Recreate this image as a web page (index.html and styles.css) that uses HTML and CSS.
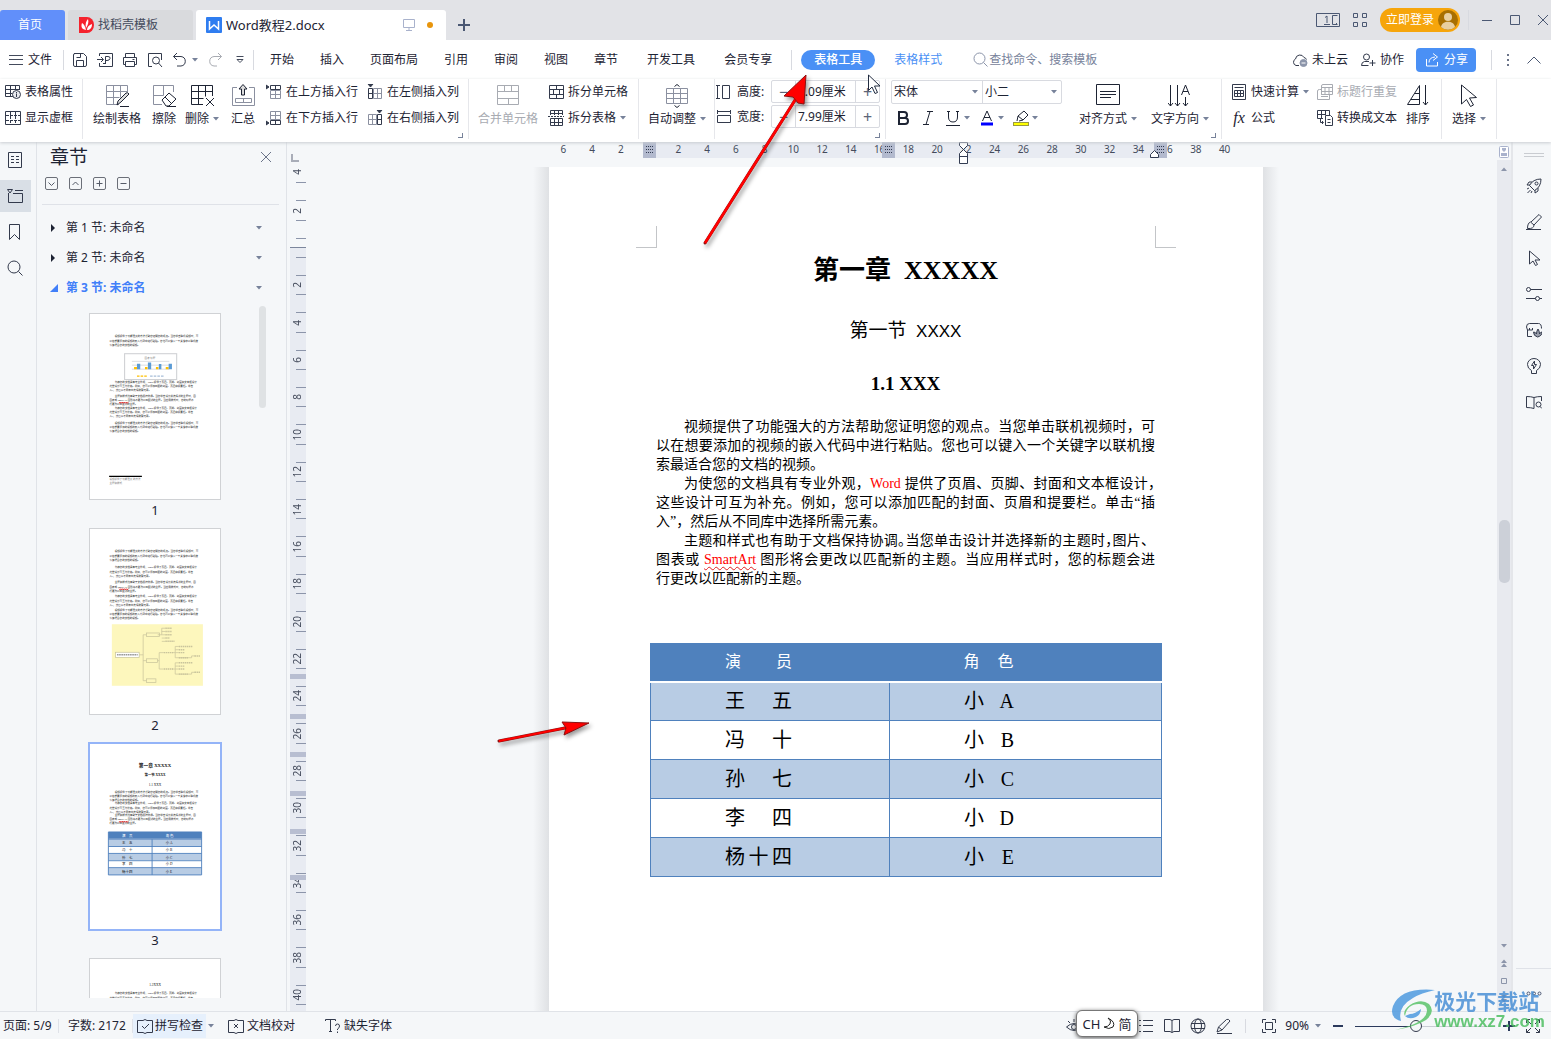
FILE: index.html
```html
<!DOCTYPE html>
<html lang="zh-CN">
<head>
<meta charset="utf-8">
<title>Word教程2.docx</title>
<link rel="stylesheet" href="styles.css">
</head>
<body>
<svg class="defs" aria-hidden="true">
  <symbol id="caret" viewBox="0 0 6 4"><path d="M0 0h6L3 3.500z" fill="#77829a"/></symbol>
</svg>

<header class="titlebar">
  <nav class="tabs">
    <a class="tab tab-home" href="#">首页</a>
    <a class="tab tab-store" href="#"><svg width="15" height="16" viewBox="0 0 15 16"><path d="M0 0h8a7 8 0 0 1 0 16H0z" fill="#f5222d"/><path d="M7 13C2 12 2 9 3 6c2 1 3 3 4 7zM7 11C6 7 7 4 9 2c1 3 0 6-2 9zM8 13c0-3 2-5 5-6 0 4-2 6-5 6z" fill="#fff"/></svg>找稻壳模板</a>
    <a class="tab tab-doc" href="#"><svg width="16" height="16" viewBox="0 0 16 16"><rect width="16" height="16" rx="1" fill="#2f7df0"/><path d="M3.500 4v8L8 8l4.500 4V4" fill="none" stroke="#fff" stroke-width="1.500"/></svg><span class="tab-name">Word教程2.docx</span><svg width="12" height="12" viewBox="0 0 12 12" fill="none" stroke="#a9b2cc"><path d="M.5.5h11v8H.5zM6 8.500v3M3 11.500h6"/></svg><i class="unsaved"></i></a>
    <button class="newtab" aria-label="新建"><svg width="12" height="12" viewBox="0 0 12 12"><path d="M6 0v12M0 6h12" stroke="#4b5873" stroke-width="2"/></svg></button>
  </nav>
  <div class="wincontrols">
    <svg width="24" height="14" viewBox="0 0 24 14" fill="none" stroke="#4b5873"><path d="M.5.5h23v13H.5zM21.500 2.500h-5v9h5M20 10.500h1M8 11.500h6M11 3v7M9 4.500l2-1.500"/></svg>
    <svg width="14" height="14" viewBox="0 0 14 14" fill="none" stroke="#4b5873"><path d="M.5.5h4v4h-4zM9.500.5h4v4h-4zM.5 9.500h4v4h-4zM9.500 9.500h4v4h-4z"/></svg>
    <button class="login">立即登录<svg width="20" height="20" viewBox="0 0 20 20"><circle cx="10" cy="10" r="10" fill="#a86f00"/><circle cx="10" cy="7" r="4" fill="#e8cfa0"/><path d="M3 17c1-7 13-7 14 0a10 10 0 0 1-14 0z" fill="#e8cfa0"/></svg></button>
    <i class="vline"></i>
    <button aria-label="最小化"><svg width="10" height="10" viewBox="0 0 10 10"><path d="M0 5.500h10" stroke="#4b5873"/></svg></button>
    <button aria-label="最大化"><svg width="10" height="10" viewBox="0 0 10 10"><path d="M.5.5h9v9h-9z" fill="none" stroke="#4b5873"/></svg></button>
    <button aria-label="关闭"><svg width="10" height="10" viewBox="0 0 10 10"><path d="M0 0l10 10M10 0L0 10" stroke="#4b5873"/></svg></button>
  </div>
</header>

<div class="menubar">
  <button class="file"><svg width="14" height="12" viewBox="0 0 14 12"><path d="M0 1.500h14M0 5.500h14M0 10.500h14" stroke="#444b5c"/></svg>文件</button>
  <i class="vline"></i>
  <div class="quick">
    <button aria-label="保存"><svg class="ic" viewBox="0 0 16 16"><path d="M2 1.500h9.500l3 3v8.500a1.500 1.500 0 0 1-1.500 1.500H3A1.500 1.500 0 0 1 1.500 13V3A1.500 1.500 0 0 1 3 1.500M4.500 14V8.500h7V14M4.500 5.500h4M8.500 1.500v4"/></svg></button>
    <button aria-label="输出为PDF"><svg class="ic" viewBox="0 0 16 16"><path d="M2.500 4V1.500h13v13h-13V11M0 7.500h6M4 5l2.500 2.500L4 10M8.500 12V4.500h2.500q2.500 0 2 2T10 8.500H8.500M8.500 11.500H6"/></svg></button>
    <button aria-label="打印"><svg class="ic" viewBox="0 0 16 16"><path d="M3.500 5V1.500h9V5M3.500 12.500h-2v-7h13v7h-2M3.500 9.500h9v5h-9zM10.500 7.500h2"/></svg></button>
    <button aria-label="打印预览"><svg class="ic" viewBox="0 0 16 16"><path d="M5 14.500H1.500v-13h13V8"/><circle cx="9" cy="8.500" r="3.500"/><path d="M11.500 11l3.500 4"/></svg></button>
    <button class="drop" aria-label="撤消"><svg class="ic" viewBox="0 0 16 16"><path d="M5 1L1.500 4.500 5 8M1.500 4.500H9a5 4.800 0 0 1 0 9.500H5"/></svg><svg class="caret"><use href="#caret"/></svg></button>
    <button class="dim" aria-label="恢复"><svg class="ic" viewBox="0 0 16 16"><path d="M11 1l3.500 3.500L11 8M14.500 4.500H7A5 4.800 0 0 0 7 14h3"/></svg></button>
    <button class="custom" aria-label="自定义"><svg width="8" height="8" viewBox="0 0 8 8" fill="none" stroke="#444b5c"><path d="M.5.500h7M1 3.500h6L4 6.500z"/></svg></button>
  </div>
  <i class="vline"></i>
  <nav class="menu">
    <a href="#">开始</a><a href="#">插入</a><a href="#">页面布局</a><a href="#">引用</a><a href="#">审阅</a><a href="#">视图</a><a href="#">章节</a><a class="wide" href="#">开发工具</a><a class="wide" href="#">会员专享</a>
  </nav>
  <i class="vline"></i>
  <a class="pill" href="#">表格工具</a>
  <a class="style-tab" href="#">表格样式</a>
  <label class="search"><svg width="15" height="15" viewBox="0 0 15 15" fill="none" stroke="#8c95aa"><circle cx="6.500" cy="6.500" r="5.500"/><path d="M10.500 10.500l4 4"/></svg><input type="text" value="查找命令、搜索模板" aria-label="查找命令"></label>
  <div class="menu-right">
    <button><svg class="ic" viewBox="0 0 16 16"><path d="M7 13.500H4a3.500 3.500 0 0 1-.5-6.500A4.500 4.500 0 0 1 12 5.500q2 .5 2.500 2"/><circle cx="11.500" cy="11" r="3.500" fill="#8c95aa" stroke="#8c95aa"/><path d="M9.500 11h4" stroke="#fff"/></svg>未上云</button>
    <button><svg class="ic" viewBox="0 0 16 16"><circle cx="6.500" cy="5" r="3"/><path d="M9 9.500H4.500Q1.500 10 1.500 13.500h7M12.500 8v6M9.500 11h6"/></svg>协作</button>
    <button class="share"><svg class="ic" viewBox="0 0 16 16"><path d="M2.500 7v7h11v-4M5 10.500q0-5 6-5.500M9 1.500L13.500 5 9 8.500"/></svg>分享</button>
    <i class="vline"></i>
    <button aria-label="更多"><svg width="4" height="14" viewBox="0 0 4 14" fill="#6b7489"><path d="M1 1h2v2H1zM1 6h2v2H1zM1 11h2v2H1z"/></svg></button>
    <button class="fold" aria-label="收起"><svg width="14" height="8" viewBox="0 0 14 8"><path d="M.5 7.500L7 1l6.500 6.500" fill="none" stroke="#4b5873"/></svg></button>
  </div>
</div>

<div class="ribbon">
  <section class="group g-prop">
    <div class="rows">
      <button><svg class="ic" viewBox="0 0 16 16"><path d="M8 12.500H.5v-11h14V6M.5 5.500h14M.5 9.500h7M5.500 1.500v11M10.500 1.500v4"/><circle cx="11.500" cy="10.500" r="4" fill="#e8eaef"/><path d="M11.500 9.500v3.500M11.500 8v1"/></svg>表格属性</button>
      <button><svg class="ic" viewBox="0 0 16 16"><path d="M.5 1.500h15v13H.5z"/><path d="M1 5.500h14M1 10.500h14M5.500 2v12M10.500 2v12" stroke-dasharray="3 1"/></svg>显示虚框</button>
    </div>
  </section>
  <section class="group g-draw">
    <button class="big w56"><svg class="bi" viewBox="0 0 24 24"><path d="M14 20.500H1.500v-19h21V8M1.500 7.500h21M1.500 13.500h13M8.500 1.500v19M15.500 1.500v12" stroke="#8b90a0"/><path d="M12 21l1-4 8-8q2-1 3 1l-8 8-4 3M15 22.500h9" fill="#ddd"/></svg>绘制表格</button>
    <button class="big w38"><svg class="bi" viewBox="0 0 24 24"><path d="M10 20.500H1.500v-19h20V8M1.500 11.500h10M11.500 1.500v10" stroke="#8b90a0"/><path d="M10 16l7-7 7 6-7 7h-3zM13 13l6 6M15 22.500h9" fill="#fff"/></svg>擦除</button>
    <button class="big w38"><svg class="bi" viewBox="0 0 24 24"><path d="M13 20.500H1.500v-19h21V12M1.500 7.500h21M1.500 14.500h12M8.500 1.500v19M15.500 1.500v11M16 14l8 8M24 14l-8 8"/></svg><span>删除<svg class="caret"><use href="#caret"/></svg></span></button>
    <button class="big w42"><svg class="bi" viewBox="0 0 24 24"><path d="M6 3.500H1.500v18h22v-18H18M4.500 14.500h16v4h-16zM12.500 14.500v4" stroke="#8b90a0"/><path d="M10.500 11V5H8l4-4.500L16 5h-2.500v6z" fill="#ddd"/></svg>汇总</button>
    <div class="rows ins-row">
      <button><svg class="ic" viewBox="0 0 16 16"><path d="M4.500 1.500h10v4h-10zM9.500 1.500v4"/><path d="M4.500 6.500h10v8h-10zM4.500 10.500h10M9.500 6.500v8" stroke="#8b90a0"/><path d="M0 1l3 2-3 2z" fill="currentColor"/></svg>在上方插入行</button>
      <button><svg class="ic" viewBox="0 0 16 16"><path d="M4.500 10.500h10v4h-10zM9.500 10.500v4"/><path d="M4.500 1.500h10v8h-10zM4.500 5.500h10M9.500 1.500v8" stroke="#8b90a0"/><path d="M0 11l3 2-3 2z" fill="currentColor"/></svg>在下方插入行</button>
    </div>
    <div class="rows ins-col">
      <button><svg class="ic" viewBox="0 0 16 16"><path d="M1.500 4.500h4v10h-4zM1.500 9.500h4"/><path d="M6.500 4.500h8v10h-8zM10.500 4.500v10M6.500 9.500h8" stroke="#8b90a0"/><path d="M1 0h5L3.500 3z" fill="currentColor"/></svg>在左侧插入列</button>
      <button><svg class="ic" viewBox="0 0 16 16"><path d="M10.500 4.500h4v10h-4zM10.500 9.500h4"/><path d="M1.500 4.500h8v10h-8zM5.500 4.500v10M1.500 9.500h8" stroke="#8b90a0"/><path d="M10 0h5l-2.500 3z" fill="currentColor"/></svg>在右侧插入列</button>
    </div>
    <i class="launcher"></i>
  </section>
  <section class="group g-merge">
    <button class="big w70 dim" disabled><svg class="bi" viewBox="0 0 24 24"><path d="M1.500 1.500h21v19h-21zM1.500 7.500h21v7h-21zM8.500 1.500v6M15.500 1.500v6M12.500 14.500v6"/></svg>合并单元格</button>
    <div class="rows">
      <button><svg class="ic" viewBox="0 0 16 16"><path d="M1.500 1.500h14v13h-14zM1.500 5.500h14v5h-14zM8.500 1.500v4M8.500 10.500v4M5.500 5.500v5M11.500 5.500v5"/></svg>拆分单元格</button>
      <button><svg class="ic" viewBox="0 0 16 16"><path d="M2.500 5V.5h12V5M2.500 3.500h12M6.500.5V5M10.500.5V5M2.500 8.500h12v7h-12zM2.500 12.500h12M6.500 8.500v7M10.500 8.500v7"/><path d="M0 6.500h16" stroke-dasharray="2 1"/></svg>拆分表格<svg class="caret"><use href="#caret"/></svg></button>
    </div>
  </section>
  <section class="group g-fit">
    <button class="big w60"><svg class="bi" viewBox="0 0 24 24"><path d="M1.500 4.500h21v15h-21zM1.500 9.500h21M1.500 14.500h21M8.500 4.500v15M15.500 4.500v15" stroke="#8b90a0"/><path d="M9.500 2.500L12 .5l2.500 2M9.500 21.500l2.500 2 2.500-2"/></svg><span>自动调整<svg class="caret"><use href="#caret"/></svg></span></button>
  </section>
  <section class="group g-size">
    <div class="spin"><svg class="ic" viewBox="0 0 16 16"><path d="M1.500 1.500v13M0 1.500h4M0 14.500h4M6.500 1.500h7v13h-7z"/></svg><label for="h">高度:</label><div class="stepper"><button aria-label="减小高度">−</button><input id="h" type="text" value="1.09厘米"><button aria-label="增大高度">+</button></div></div>
    <div class="spin"><svg class="ic" viewBox="0 0 16 16"><path d="M1.500 2.500h13M1.500 1v4M14.500 1v4M1.500 6.500h13v7h-13z"/></svg><label for="w">宽度:</label><div class="stepper"><button aria-label="减小宽度">−</button><input id="w" type="text" value="7.99厘米"><button aria-label="增大宽度">+</button></div></div>
    <i class="launcher"></i>
  </section>
  <section class="group g-font">
    <div class="fontbox">
      <div class="selects">
        <span class="sel sel-face"><select aria-label="字体"><option>宋体</option></select><svg class="caret"><use href="#caret"/></svg></span>
        <span class="sel sel-size"><select aria-label="字号"><option>小二</option></select><svg class="caret"><use href="#caret"/></svg></span>
      </div>
      <div class="fmt">
        <button aria-label="加粗"><svg class="ic" viewBox="0 0 16 16"><path d="M4 2h5a3 3 0 0 1 0 6H4zM4 8h6a3 3 0 0 1 0 6H4z" stroke-width="2"/></svg></button>
        <button aria-label="倾斜"><svg class="ic" viewBox="0 0 16 16"><path d="M7 1.500h6M3 14.500h6M10 1.500l-4 13"/></svg></button>
        <button class="drop" aria-label="下划线"><svg class="ic" viewBox="0 0 16 16"><path d="M3.500 1v6q0 5 4.500 5t4.500-5V1M1 15.500h14M2 1.500h3M11 1.500h3"/></svg><svg class="caret"><use href="#caret"/></svg></button>
        <button class="drop" aria-label="字体颜色"><svg class="ic" viewBox="0 0 16 16"><path d="M3.500 11L8 1l4.500 10M5 7.500h6"/><path d="M2 14h12" stroke="#00f" stroke-width="3"/></svg><svg class="caret"><use href="#caret"/></svg></button>
        <button class="drop" aria-label="突出显示"><svg class="ic" viewBox="0 0 16 16"><path d="M4 11l1-5 6-5 4 4-5 5-4 1M5 6l5 4"/><rect x=".5" y="12.500" width="15" height="3" fill="#ff0" stroke="#999940"/></svg><svg class="caret"><use href="#caret"/></svg></button>
      </div>
    </div>
    <button class="big w72"><svg class="bi" viewBox="0 0 24 24"><path d="M.5.500h23v20H.5zM4 7.500h16M4 10.500h16M4 13.500h11"/></svg><span>对齐方式<svg class="caret"><use href="#caret"/></svg></span></button>
    <button class="big w72"><svg class="bi" viewBox="0 0 24 24"><path d="M2.500 1v21M0 19l2.500 3L5 19M9.500 1v21M7 19l2.500 3 2.500-3M17.500 13v9M15 19l2.500 3 2.500-3M13.500 11L17.500 1l4 10M15 7.500h5"/></svg><span>文字方向<svg class="caret"><use href="#caret"/></svg></span></button>
    <i class="launcher"></i>
  </section>
  <section class="group g-data">
    <div class="rows calc">
      <button><svg class="ic" viewBox="0 0 16 16"><path d="M1.500.5h13v15h-13zM3.500 3.500h9M3.500 6.500h9v6h-9zM3.500 9.500h9M6.500 6.500v6M9.500 6.500v6"/></svg>快速计算<svg class="caret"><use href="#caret"/></svg></button>
      <button><i class="fx">fx</i>公式</button>
    </div>
    <div class="rows">
      <button class="dim" disabled><svg class="ic" viewBox="0 0 16 16"><path d="M4.500 10.500V2q0-1.500 1.500-1.500h9.500v10zM4.500 3.500h11M8 3.500v7M12 3.500v7M4.500 7.500h11M.5 15.500V7q0-1.500 2-1.500h2v5h8v5zM4 12.500h7"/></svg>标题行重复</button>
      <button><svg class="ic" viewBox="0 0 16 16"><path d="M6 8.500H.5V.5h12V5M.5 4.500h8M4.500.5v8M8.500.5V5M3.500 9v3.500H6M5 11l1.500 1.500L5 14M8.500 5.500h5l2 2v8h-7zM10.500 9.500h3M10.500 12.500h3"/></svg>转换成文本</button>
    </div>
    <button class="big w42"><svg class="bi" viewBox="0 0 24 24"><path d="M1.500 20.500h12V1.500zM5 15.500h8.500M9 9.500h4.500M19.500 1v20M17 18l2.500 3L22 18"/></svg>排序</button>
  </section>
  <section class="group g-select">
    <button class="big w54"><svg class="bi" viewBox="0 0 24 24"><path d="M4.500 1v19l5-4.500 4 7 3-1.500-4-7 7-.5z"/></svg><span>选择<svg class="caret"><use href="#caret"/></svg></span></button>
  </section>
</div>

<main class="work">
  <nav class="rail-left">
    <button aria-label="目录"><svg class="ic" viewBox="0 0 16 16"><path d="M1.500.5h13v15h-13zM4 4.500h3M9 4.500h3M4 7.500h3M9 7.500h3M4 10.500h3M9 10.500h3"/></svg></button>
    <button class="on" aria-label="章节"><svg class="ic" viewBox="0 0 16 16"><path d="M1.500 5v9.500h14v-9H6M.5 1.500h5L3 5zM8 2.500h8"/></svg></button>
    <button aria-label="书签"><svg class="ic" viewBox="0 0 16 16"><path d="M2.500.5h10v15l-5-5-5 5z"/></svg></button>
    <button aria-label="查找"><svg class="ic" viewBox="0 0 16 16"><circle cx="7" cy="7" r="6"/><path d="M11.500 11.500l4 4"/></svg></button>
  </nav>

  <aside class="panel">
    <div class="panel-head"><h2>章节</h2><button aria-label="关闭窗格"><svg width="10" height="10" viewBox="0 0 10 10"><path d="M0 0l10 10M10 0L0 10" stroke="#6b7489"/></svg></button></div>
    <div class="panel-tools">
      <button aria-label="展开"><svg width="13" height="13" viewBox="0 0 13 13"><path d="M3.500 5.500l3 3 3-3"/></svg></button>
      <button aria-label="折叠"><svg width="13" height="13" viewBox="0 0 13 13"><path d="M3.500 8l3-3 3 3"/></svg></button>
      <button aria-label="新增"><svg width="13" height="13" viewBox="0 0 13 13"><path d="M3.500 6.500h6M6.500 3.500v6"/></svg></button>
      <button aria-label="删除"><svg width="13" height="13" viewBox="0 0 13 13"><path d="M3.500 6.500h6"/></svg></button>
    </div>
    <ul class="tree">
      <li><svg width="6" height="8" viewBox="0 0 6 8"><path d="M1 0l4 4-4 4z" fill="#1d2333"/></svg><span>第 1 节: 未命名</span><svg class="caret"><use href="#caret"/></svg></li>
      <li><svg width="6" height="8" viewBox="0 0 6 8"><path d="M1 0l4 4-4 4z" fill="#1d2333"/></svg><span>第 2 节: 未命名</span><svg class="caret"><use href="#caret"/></svg></li>
      <li class="open"><svg width="8" height="8" viewBox="0 0 8 8"><path d="M8 0v8H0z" fill="#417ff9"/></svg><span>第 3 节: 未命名</span><svg class="caret"><use href="#caret"/></svg></li>
    </ul>
    <div class="thumbs">
      <figure>
        <svg class="thumb" viewBox="0 0 714 1010">
          <g transform="translate(0 112)"><g id="para1">
            <text x="136" y="14">视频提供了功能强大的方法帮助您证明您的观点。当您单击联机视频时，可</text>
            <text x="107" y="38">以在想要添加的视频的嵌入代码中进行粘贴。您也可以键入一个关键字以联机搜</text>
            <text x="107" y="60">索最适合您的文档的视频。</text>
          </g></g>
          <rect x="190" y="215" width="286" height="142" fill="#fff" stroke="#d0d2d5" stroke-width="6"/>
          <text x="300" y="243" class="t-mute">图表 标题</text>
          <path d="M230 257h206M230 278h206M230 300h206" stroke="#d0d2d5" stroke-width="4"/>
          <path d="M242 300v-12h16v12zM302 300v-12h14v12zM362 300v-12h14v12zM416 300v-12h16v12z" fill="#ffc000"/>
          <path d="M258 300v-30h18v30zM318 300v-36h18v36zM378 300v-28h14v28zM432 300v-30h18v30z" fill="#5b9bd5"/>
          <path d="M258 338h60" stroke="#ffc000" stroke-width="6" stroke-dasharray="14 6"/><path d="M330 338h80" stroke="#a6bdd8" stroke-width="6" stroke-dasharray="14 6"/>
          <g transform="translate(0 362)"><g id="para2">
            <text x="136" y="14">为使您的文档具有专业外观，Word 提供了页眉、页脚、封面和文本框设计</text>
            <text x="107" y="38">这些设计可互为补充。例如，您可以添加匹配的封面、页眉和提要栏。单击</text>
            <text x="107" y="60">入”，然后从不同库中选择所需元素。</text>
          </g></g>
          <g transform="translate(0 438)"><g id="para3">
            <text x="136" y="14">主题和样式也有助于文档保持协调。当您单击设计并选择新的主题时，图</text>
            <text x="107" y="38">图表或 SmartArt 图形将会更改以匹配新的主题。当应用样式时，您的标题会</text>
            <text x="107" y="60">行更改以匹配新的主题。</text>
            <path d="M160 43l5 6 5-6 5 6 5-6 5 6 5-6 5 6 5-6 5 6 5-6" stroke="#e02020" stroke-width="5" fill="none"/>
          </g></g>
          <use href="#para2" y="504"/>
          <use href="#para1" y="586"/>
          <path d="M105 889h180" stroke="#000" stroke-width="6"/>
          <text x="107" y="908" class="t-mute">视频提供了功能强大 的方法</text><text x="107" y="928" class="t-mute">主题和样式</text>
        </svg><figcaption>1</figcaption>
      </figure>
      <figure>
        <svg class="thumb" viewBox="0 0 714 1010">
          <use href="#para1" y="112"/>
          <use href="#para2" y="198"/>
          <use href="#para3" y="282"/>
          <use href="#para2" y="358"/>
          <use href="#para1" y="434"/>
          <rect x="120" y="520" width="500" height="338" fill="#fdf7bd"/>
          <g fill="none" stroke="#c9c49c" stroke-width="4"><rect x="140" y="674" width="130" height="28" fill="#fff"/><path d="M270 688h22M310 578h-18v252h18M292 720h18M372 578h22v-36h20M394 560h20M394 578h20M394 596h20M394 614h20M372 720h8v-44h26M380 720v46h26M450 676h18v-34h20M468 660h20M468 676h20M468 704h90v-10h20M468 676v28M450 766h18v-34h20M468 750h20M468 766h20M468 794h90v-10h20M468 766v28"/><rect x="310" y="568" width="72" height="20"/><rect x="310" y="710" width="60" height="20"/><rect x="310" y="820" width="52" height="20"/><path d="M414 542h36M414 560h36M414 578h36M414 596h24M414 614h50M406 676h50M406 766h50M488 642h76M488 660h30M488 676h30M488 704h50M488 732h76M488 750h30M488 766h30M488 794h50M574 694h30M574 784h30" stroke-width="8" stroke-dasharray="8 3"/></g>
          <path d="M148 688h114" stroke="#999" stroke-width="8" stroke-dasharray="9 3"/>
        </svg><figcaption>2</figcaption>
      </figure>
      <figure class="current">
        <svg class="thumb" viewBox="0 0 714 1010">
          <text x="357" y="122" class="t-h1">第一章 XXXXX</text>
          <text x="357" y="175" class="t-h2">第一节 XXXX</text>
          <text x="357" y="228" class="t-h3">1.1 XXX</text>
          <use href="#para1" y="250"/>
          <use href="#para2" y="314"/>
          <use href="#para3" y="378"/>
          <path d="M101 480h512v236H101z" fill="#fff"/>
          <path d="M101 480h512v38H101z" fill="#4f81bd"/>
          <path d="M101 522h512v36H101zM101 600h512v36H101zM101 678h512v38H101z" fill="#b8cce4"/>
          <path d="M101 480h512v236H101zM101 520h512M101 560h512M101 598h512M101 638h512M101 676h512M341 520v196" fill="none" stroke="#4f81bd" stroke-width="5"/>
          <g class="t-cell"><text x="176" y="508" fill="#fff">演　员</text><text x="416" y="508" fill="#fff">角 色</text><text x="176" y="548">王　五</text><text x="416" y="548">小 A</text><text x="176" y="586">冯　十</text><text x="416" y="586">小 B</text><text x="176" y="626">孙　七</text><text x="416" y="626">小 C</text><text x="176" y="664">李　四</text><text x="416" y="664">小 D</text><text x="176" y="704">杨十四</text><text x="416" y="704">小 E</text></g>
        </svg><figcaption>3</figcaption>
      </figure>
      <figure>
        <svg class="thumb" viewBox="0 0 714 1010">
          <text x="357" y="146" class="t-h3">1.2XXX</text>
          <use href="#para2" y="176"/>
        </svg>
      </figure>
      <i class="thumb-scroll"></i>
    </div>
  </aside>

  <div class="vruler">
    <ol>
      <li><b>4</b></li><li><b>2</b></li><li></li><li><b>2</b></li><li><b>4</b></li><li><b>6</b></li><li><b>8</b></li><li><b>10</b></li><li><b>12</b></li><li><b>14</b></li><li><b>16</b></li><li><b>18</b></li><li><b>20</b></li><li><b>22</b></li><li><b>24</b></li><li><b>26</b></li><li><b>28</b></li><li><b>30</b></li><li><b>32</b></li><li><b>34</b></li><li><b>36</b></li><li><b>38</b></li><li><b>40</b></li>
    </ol>
    <svg class="row-marks" width="16" height="206" viewBox="0 0 16 206"><path d="M0 0h16v5H0zM0 40h16v5H0zM0 78h16v5H0zM0 117h16v5H0zM0 155h16v5H0zM0 201h16v5H0z" fill="#b8bed1"/></svg>
  </div>

  <div class="canvas">
    <div class="hruler">
      <ol>
        <li>6</li><li>4</li><li>2</li><li></li><li>2</li><li>4</li><li>6</li><li>8</li><li>10</li><li>12</li><li>14</li><li>16</li><li>18</li><li>20</li><li>22</li><li>24</li><li>26</li><li>28</li><li>30</li><li>32</li><li>34</li><li>36</li><li>38</li><li>40</li>
      </ol>
      <svg class="col-marks" width="714" height="24" viewBox="0 0 714 24"><path d="M94 0h13v16H94zM333 0h13v16h-13zM605 0h13v16h-13z" fill="#b3bace"/><path d="M97 4.500h8M97 7.500h8M97 10.500h8M336 4.500h8M336 7.500h8M336 10.500h8M608 4.500h8M608 7.500h8M608 10.500h8" stroke="#333c52" stroke-dasharray="1 1"/><path d="M410.500.5h8v3l-4 4 4 4v10h-8v-10l4-4-4-4zM410.500 14.500h8M601.500 15.500v-3l4-4 4 4v3z" fill="#fff" stroke="#333c52"/></svg>
    </div>
    <div class="sheet-wrap">
      <article class="sheet">
        <i class="crop crop-l"></i><i class="crop crop-r"></i>
        <h1>第一章&nbsp; XXXXX</h1>
        <h2>第一节&nbsp; <span>XXXX</span></h2>
        <h3>1.1 XXX</h3>
        <p><span class="ln in">视频提供了功能强大的方法帮助您证明您的观点。当您单击联机视频时，可</span><span class="ln">以在想要添加的视频的嵌入代码中进行粘贴。您也可以键入一个关键字以联机搜</span><span class="ln end">索最适合您的文档的视频。</span></p>
        <p><span class="ln in">为使您的文档具有专业外观，<span class="red">Word</span> 提供了页眉、页脚、封面和文本框设计<b class="half">，</b></span><span class="ln">这些设计可互为补充。例如，您可以添加匹配的封面、页眉和提要栏。单击“插</span><span class="ln end">入”，然后从不同库中选择所需元素。</span></p>
        <p><span class="ln in">主题和样式也有助于文档保持协调<b class="half">。</b>当您单击设计并选择新的主题时<b class="half">，</b>图片、</span><span class="ln">图表或 <span class="red typo">SmartArt</span> 图形将会更改以匹配新的主题。当应用样式时，您的标题会进</span><span class="ln end">行更改以匹配新的主题。</span></p>
        <table>
          <thead><tr><th><span class="w3">演 员</span></th><th><span class="w2">角 色</span></th></tr></thead>
          <tbody>
            <tr><td><span class="w3">王 五</span></td><td><span class="w2">小 A</span></td></tr>
            <tr><td><span class="w3">冯 十</span></td><td><span class="w2">小 B</span></td></tr>
            <tr><td><span class="w3">孙 七</span></td><td><span class="w2">小 C</span></td></tr>
            <tr><td><span class="w3">李 四</span></td><td><span class="w2">小 D</span></td></tr>
            <tr><td><span class="w3">杨十四</span></td><td><span class="w2">小 E</span></td></tr>
          </tbody>
        </table>
      </article>
    </div>
  </div>

  <div class="vscroll">
    <svg width="10" height="12" viewBox="0 0 10 12"><rect x=".5" y=".5" width="9" height="11" rx="1" fill="#fff" stroke="#a9b2cc"/><path d="M3 2h4v2L5 6 3 4zM2 7h6v3H2z" fill="#a9b2cc"/></svg>
    <div class="track">
      <svg width="6" height="4" viewBox="0 0 6 4"><path d="M0 4l3-3.500L6 4z" fill="#8c95aa"/></svg>
      <i class="knob"></i>
      <div class="track-end">
        <svg width="6" height="4" viewBox="0 0 6 4"><path d="M0 0h6L3 3.500z" fill="#8c95aa"/></svg>
        <svg width="6" height="8" viewBox="0 0 6 8"><path d="M0 4l3-3.500L6 4zM0 8l3-3.500L6 8z" fill="#8c95aa"/></svg>
        <svg width="6" height="6" viewBox="0 0 6 6"><path d="M.5.500h5v5h-5z" fill="none" stroke="#8c95aa"/></svg>
        <svg width="6" height="8" viewBox="0 0 6 8"><path d="M0 0h6L3 3.500zM0 4h6L3 7.500z" fill="#8c95aa"/></svg>
      </div>
    </div>
  </div>

  <nav class="rail-right">
    <i class="grip"></i>
    <button aria-label="快捷"><svg class="ic" viewBox="0 0 16 16"><path d="M6 10L3.500 7.500Q7 1 15 1q0 8-6.500 11.500L6 10M4 7H1l2-3h3M9 12v3l3-2v-3M1 11l2-1M1.500 15l3-3M5 15l1-2"/><circle cx="10.500" cy="5.500" r="1.500"/></svg></button>
    <button aria-label="样式"><svg class="ic" viewBox="0 0 16 16"><path d="M5 8l8-7.500L15.500 3 8 11M4.500 8q-3 1-3 6.500Q8 15 8 11zM0 15.500h15"/></svg></button>
    <button aria-label="选择"><svg class="ic" viewBox="0 0 16 16"><path d="M3.500 1v13l3.500-3 2.500 4.500 2-1L9 10h5z"/></svg></button>
    <button aria-label="设置"><svg class="ic" viewBox="0 0 16 16"><circle cx="2.500" cy="3.500" r="2"/><path d="M4.500 3.500H16M0 12.500h9.500M13.500 12.500H16"/><circle cx="11.500" cy="12.500" r="2"/></svg></button>
    <button aria-label="资源"><svg class="ic" viewBox="0 0 16 16"><path d="M6 14.500H1.500V8L.5 5q0-3.500 3-3.500h9q3 0 3 5M1.500 8h2V6M3.500 8h3V6"/><path d="M11.500 15q-4-1-4-5 2 0 3 2 0-3 1.500-5 1.500 2 1.500 5 1-2 2.500-2 0 4-4.500 5z" fill="#9a9fac"/></svg></button>
    <button aria-label="灵感"><svg class="ic" viewBox="0 0 16 16"><path d="M5.500 12.500q-4-2-4-6a6.500 6 0 0 1 13 0q0 4-4 6v3h-5zM8.500 3L5.500 7.500h2V11l3-4.500h-2z"/></svg></button>
    <button aria-label="阅读"><svg class="ic" viewBox="0 0 16 16"><path d="M8 14.500q-3-1-7.500-1v-11q4.500 0 7.500 1 3-1 7.500-1V7M8 3.500v11"/><circle cx="12.500" cy="10.500" r="2.500"/><path d="M14 12.500l2 2"/></svg></button>
    <div class="rail-more"><svg width="16" height="5" viewBox="0 0 16 5" fill="none" stroke="#4b5873"><circle cx="2.500" cy="2.500" r="1.500"/><circle cx="8" cy="2.500" r="1.500"/><circle cx="13.500" cy="2.500" r="1.500"/></svg></div>
  </nav>
</main>

<footer class="status">
  <span class="st-page">页面: 5/9</span><span class="st-words">字数: 2172</span>
  <button class="st-spell"><svg class="ic" viewBox="0 0 16 16"><path d="M6 14.500H.5v-12H6l2-1 2 1h5.500v12H10l-2 1zM5 8l2.500 2.500L12 6"/></svg>拼写检查</button><svg class="caret"><use href="#caret"/></svg>
  <button class="st-proof"><svg class="ic" viewBox="0 0 16 16"><path d="M6 14.500H.5v-12H6l2-1 2 1h5.500v12H10l-2 1zM6 6l4 4M10 6l-4 4"/></svg>文档校对</button>
  <button class="st-miss"><svg class="ic" viewBox="0 0 16 16"><path d="M.5 3V1.500h10V3M5.500 1.500v12M4 13.500h3M10.500 8q0-2 2-2t2 2-2 3v1M12.500 13.500v1.500"/></svg>缺失字体</button>
  <div class="st-right">
    <button aria-label="护眼"><svg class="ic" viewBox="0 0 16 16"><path d="M.5 9Q8 2 15.500 9 8 16 .5 9M2 3l2 2M8 1v3"/><circle cx="8" cy="9" r="2.500"/></svg></button>
    <button class="st-list" aria-label="大纲"><svg class="ic" viewBox="0 0 16 16"><path d="M1 2.500h2M1 7.500h2M1 13.500h2M5 2.500h10M5 7.500h10M5 13.500h10"/></svg></button>
    <button aria-label="阅读版式"><svg class="ic" viewBox="0 0 16 16"><path d="M8 14.500l-2-1H.5v-12H6l2 1 2-1h5.500v12H10zM8 2.500v12"/></svg></button>
    <button aria-label="Web版式"><svg class="ic" viewBox="0 0 16 16"><circle cx="8" cy="8" r="7"/><ellipse cx="8" cy="8" rx="3.500" ry="7"/><path d="M1 5.500h14M1 10.500h14"/></svg></button>
    <button aria-label="写作"><svg class="ic" viewBox="0 0 16 16"><path d="M1 14l1.500-5 8-7.500q2-1 3.500 1.500L6 12l-5 2M2.500 9L6 12M1 15.500h15"/></svg></button>
    <i class="vline"></i>
    <button aria-label="适应"><svg class="ic" viewBox="0 0 16 16"><path d="M1.500 5V1.500H5M11 1.500h3.500V5M14.500 11v3.500H11M5 14.500H1.500V11M4.500 4.500h7v7h-7z"/></svg></button>
    <button class="zoomval">90%<svg class="caret"><use href="#caret"/></svg></button>
    <button class="zoom-btn" aria-label="缩小"><svg width="10" height="12" viewBox="0 0 10 12"><path d="M0 6h10" stroke="#2b3a5c" stroke-width="2"/></svg></button>
    <input class="zoom" type="range" min="0" max="100" value="44" aria-label="缩放">
    <button class="zoom-btn" aria-label="放大"><svg width="12" height="12" viewBox="0 0 12 12"><path d="M0 6h12M6 1v10" stroke="#2b3a5c" stroke-width="2"/></svg></button>
    <button aria-label="全屏"><svg class="ic" viewBox="0 0 16 16"><path d="M1.500 5V1.500H5M11 1.500h3.500V5M14.500 11v3.500H11M5 14.500H1.500V11M1.500 1.500L6 6M14.500 1.500L10 6M14.500 14.500L10 10M1.500 14.500L6 10"/></svg></button>
  </div>
</footer>

<div class="ime">CH <svg width="12" height="13" viewBox="0 0 12 13"><path d="M5 1q4 3 2 6-2 3-6 3 5 3 9 0 3-5-5-9z" fill="none" stroke="#222"/></svg> 简</div>

<div class="watermark">
  <svg width="46" height="42" viewBox="0 0 46 42"><path d="M44 1Q10-2 2 17q-4 12 8 15Q6 18 22 9q8-5 22-8z" fill="#4f9be0"/><path d="M14 27q2-12 14-12 8 0 8 7-1 12-32 19 20-3 31-10 10-8 3-16-8-6-19 1-8 6-5 11z" fill="#5cc46b"/><path d="M14 27q4 4 11 1 5-3 5-8-6 5-11 5z" fill="#4f9be0"/></svg>
  <div><strong>极光下载站</strong><em>www.xz7.com</em></div>
</div>

<svg class="callout callout-tool" width="116" height="182" viewBox="0 0 116 182"><path d="M5 173L97 27" stroke="#8a1010" stroke-width="3" stroke-linecap="round"/><path d="M5 173L97 27" stroke="#f00" stroke-width="2.500"/><path d="M106 5L84 26l9 1 5 6 6 1z" fill="#f00" stroke="#8a1010"/></svg>
<svg class="callout callout-table" width="100" height="34" viewBox="0 0 100 34"><path d="M4 26L70 13" stroke="#8a1010" stroke-width="3" stroke-linecap="round"/><path d="M4 26L70 13" stroke="#f00" stroke-width="2"/><path d="M94 8L67 7l4 6-2 7z" fill="#f00" stroke="#8a1010"/></svg>
<svg class="pointer" width="13" height="21" viewBox="0 0 13 21"><path d="M.5 1v15.500l3.500-3.500 3 6.500 2.500-1-3-6.500h5.500z" fill="#fff" stroke="#222c40"/></svg>
</body>
</html>
```
FILE: styles.css
```css
* { box-sizing: border-box; }
html, body { height: 100%; margin: 0; }
body {
  position: relative;
  display: flex;
  flex-direction: column;
  overflow: hidden;
  background: #f5f7f9;
  color: #1d2333;
  font: 12px/16px "Noto Sans", "Noto Sans CJK SC", sans-serif;
}
button, input, select { font: inherit; color: inherit; }
button { border: 0; padding: 0; background: none; display: flex; align-items: center; white-space: nowrap; }
a { color: inherit; text-decoration: none; white-space: nowrap; }
ol, ul { list-style: none; margin: 0; padding: 0; }
svg { flex: none; display: block; }
.defs { position: absolute; width: 0; height: 0; }
.ic { width: 16px; height: 16px; fill: none; stroke: currentColor; color: #333a4c; }
.bi { width: 24px; height: 24px; fill: none; stroke: currentColor; }
.caret { width: 6px; height: 4px; }
.vline { width: 1px; height: 20px; background: #d8dae0; flex: none; }
.dim, .dim .ic { color: #a8abb2; }

/* title bar */
.titlebar { height: 40px; flex: none; display: flex; justify-content: space-between; background: #e2e3e7; }
.tabs { display: flex; align-items: flex-end; gap: 3px; }
.tab { height: 30px; display: flex; align-items: center; border-radius: 3px 3px 0 0; }
.tab-home { width: 65px; padding-left: 18px; background: #618ffa; color: #fff; }
.tab-store { width: 125px; padding-left: 11px; gap: 4px; background: #d9dadd; color: #444b5c; }
.tab-doc { width: 250px; padding: 0 13px 0 10px; gap: 4px; background: #fff; }
.tab-name { flex: 1; font-size: 13px; }
.tab-doc > svg:nth-of-type(2) { margin-right: 0; }
.unsaved { width: 6px; height: 6px; margin-left: 8px; border-radius: 50%; background: #e8950c; }
.newtab { height: 30px; padding: 0 9px; }
.wincontrols { display: flex; align-items: center; gap: 13px; height: 40px; padding-right: 3px; }
.wincontrols button + button { margin-left: 5px; }
.login { height: 24px; padding: 0 2px 0 6px; gap: 4px; border-radius: 12px; background: #f6a50b; color: #fff; }
.wincontrols .vline { margin-left: -5px; }

/* menu bar */
.menubar { height: 39px; flex: none; display: flex; align-items: center; background: #fff; }
.file { width: 63px; padding-left: 9px; gap: 5px; }
.quick { display: flex; align-items: center; width: 189px; padding-left: 8px; gap: 9px; }
.drop { gap: 4px; }
.custom { margin-left: 4px; }
.menu { display: flex; gap: 26px; padding: 0 19px 0 16px; }
.menu .wide { margin-left: 3px; }
.pill { margin-left: 9px; padding: 2px 13px; border-radius: 10px; background: #4a90f5; color: #fff; font-weight: 500; }
.style-tab { margin-left: 19px; color: #4a90f5; }
.search { display: flex; align-items: center; margin-left: 31px; color: #77829a; }
.search input { width: 130px; border: 0; padding: 0 1px; background: none; }
.menu-right { margin-left: auto; display: flex; align-items: center; gap: 12px; padding-right: 10px; }
.menu-right button { gap: 4px; }
.menu-right .share { height: 24px; padding: 0 8px; gap: 4px; border-radius: 4px; background: #4a90f5; color: #fff; }
.share .ic { color: #fff; }
.menu-right .vline { margin: 0 2px 0 3px; }
.menu-right .fold { margin-left: 5px; }

/* ribbon */
.ribbon { height: 63px; flex: none; display: flex; background: #fff; box-shadow: 0 1px 3px #c9ccd1; z-index: 1; }
.group { position: relative; display: flex; align-items: flex-start; flex: none; border-right: 1px solid #e6e7eb; height: 60px; }
.rows { display: flex; flex-direction: column; }
.rows button { height: 26px; gap: 4px; }
.big { flex-direction: column; align-items: center; height: 52px; padding-top: 5px; gap: 3px; }
.big span { display: flex; align-items: center; gap: 4px; }
.w38 { width: 38px; } .w42 { width: 42px; } .w54 { width: 54px; } .w56 { width: 56px; } .w60 { width: 62px; } .w70 { width: 70px; } .w72 { width: 72px; }
.launcher { position: absolute; right: 5px; bottom: 1px; width: 5px; height: 5px; border: solid #77829a; border-width: 0 1px 1px 0; }
.g-prop { width: 83px; padding-left: 5px; }
.g-draw { width: 386px; padding-left: 6px; }
.ins-row { width: 101px; margin-left: 2px; }
.g-draw .w42 { margin-left: 1px; }
.g-merge { width: 170px; padding-left: 4px; }
.g-merge .rows { margin-left: 5px; }
.g-fit { width: 76px; padding-left: 7px; }
.g-size { width: 171px; padding: 1px 0 0 1px; flex-direction: column; gap: 2px; }
.spin { display: flex; align-items: center; gap: 5px; }
.spin label { width: 29px; }
.stepper { display: flex; width: 109px; height: 23px; border: 1px solid #d8dae0; border-radius: 2px; }
.stepper button { width: 23px; justify-content: center; font-size: 16px; color: #5d6578; }
.stepper input { flex: 1; min-width: 0; border: solid #d8dae0; border-width: 0 1px; padding: 0 2px; background: none; }
.g-font { width: 336px; padding-left: 5px; }
.fontbox { width: 181px; padding-top: 1px; }
.selects { display: flex; width: 171px; height: 24px; border: 1px solid #d8dae0; border-radius: 2px; }
.sel { display: flex; align-items: center; padding-right: 4px; }
.sel select { flex: 1; appearance: none; border: 0; background: none; padding: 0 2px; }
.sel-face { width: 91px; border-right: 1px solid #d8dae0; }
.sel-size { flex: 1; }
.fmt { display: flex; align-items: center; gap: 9px; height: 28px; padding-left: 4px; }
.fmt .drop { gap: 3px; }
.fmt .ic { color: #1d2333; }
.g-data { width: 220px; padding-left: 9px; }
.calc { width: 86px; }
.fx { width: 16px; font: italic 16px/16px "Liberation Serif", serif; }
.g-select { width: 55px; }

/* work area */
.work { flex: 1; min-height: 0; display: flex; overflow: hidden; }
.rail-left { width: 37px; flex: none; border-right: 1px solid #e0e3e8; padding-top: 2px; display: flex; flex-direction: column; gap: 4px; }
.rail-left button { width: 31px; height: 32px; padding-left: 7px; }
.rail-left .on { background: #d9dfe6; }
.panel { width: 250px; flex: none; border-right: 1px solid #e0e3e8; padding: 0 7px 13px 5px; display: flex; flex-direction: column; }
.panel-head { display: flex; align-items: center; justify-content: space-between; height: 30px; padding: 0 8px; }
.panel-head h2 { margin: 0; font-size: 19px; line-height: 30px; font-weight: 400; }
.panel-tools { display: flex; gap: 11px; height: 33px; padding: 5px 3px 0; border-bottom: 1px solid #dfe2e8; }
.panel-tools button { height: 13px; border: 1px solid #6b6f78; border-radius: 2px; width: 13px; justify-content: center; }
.panel-tools svg { fill: none; stroke: #555b68; }
.tree { padding-top: 8px; }
.tree li { display: flex; align-items: center; height: 30px; padding: 0 17px 0 8px; }
.tree li span { flex: 1; padding-left: 10px; }
.tree .open { color: #417ff9; font-weight: 700; }
.tree .open span { padding-left: 8px; }
.thumbs { position: relative; flex: 1; min-height: 0; overflow: hidden; padding: 10px 11px 0 0; display: flex; flex-direction: column; align-items: center; }
.thumbs figure { margin: 0; flex: none; height: 215px; }
.thumb { width: 132px; height: 187px; border: 1px solid #d0d2d5; background: #fff; font: 14px "Liberation Serif", "Noto Sans CJK SC", serif; fill: #111; }
.current .thumb { outline: 2px solid #94b4f8; outline-offset: -1px; }
.thumbs figcaption { text-align: center; line-height: 20px; font-size: 13px; }
.t-mute { fill: #777; }
.t-h1 { font-size: 26px; font-weight: 700; text-anchor: middle; }
.t-h2 { font-size: 19px; font-weight: 700; text-anchor: middle; }
.t-h3 { font-size: 19px; text-anchor: middle; }
.t-cell { font-size: 19px; }
.thumb-scroll { position: absolute; right: 13px; top: 3px; width: 7px; height: 102px; border-radius: 4px; background: #dfe2e4; }

.vruler { position: relative; width: 19px; flex: none; padding: 13px 0 0 3px; overflow: hidden; font: 10px/12px "Noto Sans", sans-serif; color: #444b5c; }
.vruler ol { display: grid; grid-auto-rows: 1fr; height: 859px; background: linear-gradient(transparent 92px, #7c869c 92px, #7c869c 93px, #e8ebf2 93px); }
.vruler li { display: flex; flex-direction: column; justify-content: space-between; padding: 8px 0 9px; min-height: 0; }
.vruler b { writing-mode: vertical-rl; transform: rotate(180deg); font-weight: 400; align-self: flex-start; margin: -4px 0 -4px 1px; }
.vruler li::before, .vruler li::after { content: ""; flex: none; align-self: flex-end; height: 1px; width: 10px; background: #8c95aa; }
.vruler li:first-child::before { width: 6px; height: 6px; margin: -9px 7px 0 0; background: none; border: solid #a9adb8; border-width: 0 0 2px 2px; }
.row-marks { position: absolute; left: 3px; top: 532px; }

.canvas { flex: 1; min-width: 0; display: flex; flex-direction: column; align-items: center; padding-left: 9px; }
.hruler { position: relative; width: 714px; height: 25px; flex: none; font: 10px/15px "Noto Sans", sans-serif; color: #444b5c; }
.hruler ol { display: grid; grid-auto-flow: column; grid-auto-columns: 1fr; width: 714px; padding-right: 24px; text-align: center; background: linear-gradient(to right, transparent 100px, #e8ebf2 100px, #e8ebf2 612px, transparent 612px); min-height: 16px; }
.col-marks { position: absolute; left: 0; top: 0; }
.sheet-wrap { flex: 1; padding: 0 16px; background: linear-gradient(to right, #f5f7f9, #dfe1e4 16px, #dfe1e4 730px, #f5f7f9 746px); }
.sheet { position: relative; width: 714px; height: 100%; padding: 81px 108px 0 107px; background: #fff; color: #000; font: 14px/19px "Liberation Serif", "Noto Sans CJK SC", serif; }
.crop { position: absolute; top: 59px; width: 21px; height: 22px; border: solid #c3c5c8; border-width: 0 0 1px 0; }
.crop-l { left: 87px; border-right-width: 1px; }
.crop-r { right: 87px; border-left-width: 1px; }
.sheet h1, .sheet h2, .sheet h3 { margin: 0; text-align: center; }
.sheet h1 { font-size: 26px; line-height: 46px; }
.sheet h2 { margin-top: 22px; font-size: 19px; line-height: 30px; font-weight: 400; }
.sheet h2 span { font: 17px "Liberation Sans", sans-serif; }
.sheet h3 { margin: 23px 0 18px; font-size: 19px; line-height: 30px; }
.sheet p { margin: 0; }
.ln { display: block; white-space: nowrap; text-align: justify; text-align-last: justify; }
.in { padding-left: 28px; }
.end { text-align-last: left; }
.half { font-weight: 400; font-feature-settings: "halt"; }
.red { color: #f00; }
.typo { text-decoration: underline wavy #e02020 1px; text-underline-offset: 2px; }
.sheet table { width: 512px; margin: 55px 0 0 -6px; border-collapse: collapse; table-layout: fixed; border: 1px solid #4f81bd; }
.sheet th { height: 38px; background: #4f81bd; color: #fff; font-size: 16px; font-weight: 400; border-bottom: 2px solid #fff; }
.sheet td { height: 39px; font-size: 20px; border: 1px solid #4f81bd; }
.sheet th, .sheet td { padding: 0 0 0 74px; text-align: left; }
.sheet th:first-child { width: 239px; }
.sheet tbody tr:nth-child(odd) { background: #b8cce4; }
.w3, .w2 { display: inline-block; text-align: justify; text-align-last: justify; line-height: 24px; }
.w3 { width: 67px; }
.w2 { width: 50px; }

.vscroll { width: 14px; flex: none; display: flex; flex-direction: column; align-items: center; padding-top: 4px; gap: 2px; }
.track { flex: 1; width: 14px; display: flex; flex-direction: column; align-items: center; padding: 7px 0 8px; background: #e8eaef; }
.knob { width: 11px; height: 63px; margin-top: 349px; border-radius: 5px; background: #ccd0d8; }
.track-end { margin-top: auto; display: flex; flex-direction: column; gap: 11px; }
.rail-right { width: 40px; flex: none; display: flex; flex-direction: column; align-items: center; gap: 20px; border-left: 2px solid #e4e6ea; padding: 11px 0 0 3px; }
.rail-right button { height: 16px; }
.grip { width: 20px; height: 4px; border: solid #c9ccd1; border-width: 1px 0; margin-bottom: 1px; }
.rail-more { width: 100%; margin-top: auto; height: 43px; border-top: 1px solid #dfe2e8; display: flex; justify-content: center; padding-top: 22px; }

/* status bar */
.status { height: 28px; flex: none; display: flex; align-items: center; border-top: 1px solid #e0e3e8; padding: 1px 0 0 3px; white-space: nowrap; }
.st-page { width: 56px; border-right: 1px solid #dfe2e8; line-height: 14px; }
.st-words { width: 74px; padding-left: 9px; line-height: 14px; border-right: 1px solid #dfe2e8; }
.st-spell { height: 24px; width: 73px; padding-left: 4px; gap: 2px; background: #e6f0fc; margin-right: 2px; }
.st-proof { margin-left: 14px; gap: 3px; }
.st-miss { margin-left: 30px; gap: 3px; }
.st-right { margin-left: auto; display: flex; align-items: center; gap: 10px; padding-right: 10px; }
.st-list { margin-left: 46px; }
.st-right .vline { height: 14px; margin: 0 5px 0 3px; }
.zoomval { gap: 6px; margin: 0 2px 0 -2px; }
.zoom { appearance: none; width: 136px; height: 14px; margin: 0 2px; background: linear-gradient(to right, #2b3a5c 61px, #c9ccd4 61px) center / 100% 1px no-repeat; }
.zoom::-webkit-slider-thumb { appearance: none; width: 12px; height: 12px; border: 1px solid #333a4c; border-radius: 50%; background: #f5f7f9; }

/* floating items */
.ime { position: absolute; left: 1076px; top: 1010px; z-index: 3; width: 62px; height: 27px; display: flex; align-items: center; justify-content: center; gap: 3px; border: 1px solid #777; border-radius: 6px; background: #fff; box-shadow: 0 1px 4px #555; font-size: 13px; }
.watermark { position: absolute; right: 6px; bottom: 8px; z-index: 3; display: flex; opacity: .85; pointer-events: none; }
.watermark div { display: flex; flex-direction: column; margin-left: -3px; }
.watermark strong { font-size: 21px; line-height: 24px; color: #4a90d6; }
.watermark em { font: bold 17px/18px "Liberation Sans", sans-serif; color: #4fbf63; }
.callout { position: absolute; z-index: 3; fill: none; filter: drop-shadow(2px 3px 2px #0006); pointer-events: none; }
.callout-tool { left: 700px; top: 70px; }
.callout-table { left: 495px; top: 715px; }
.pointer { position: absolute; left: 868px; top: 74px; z-index: 3; }
```
